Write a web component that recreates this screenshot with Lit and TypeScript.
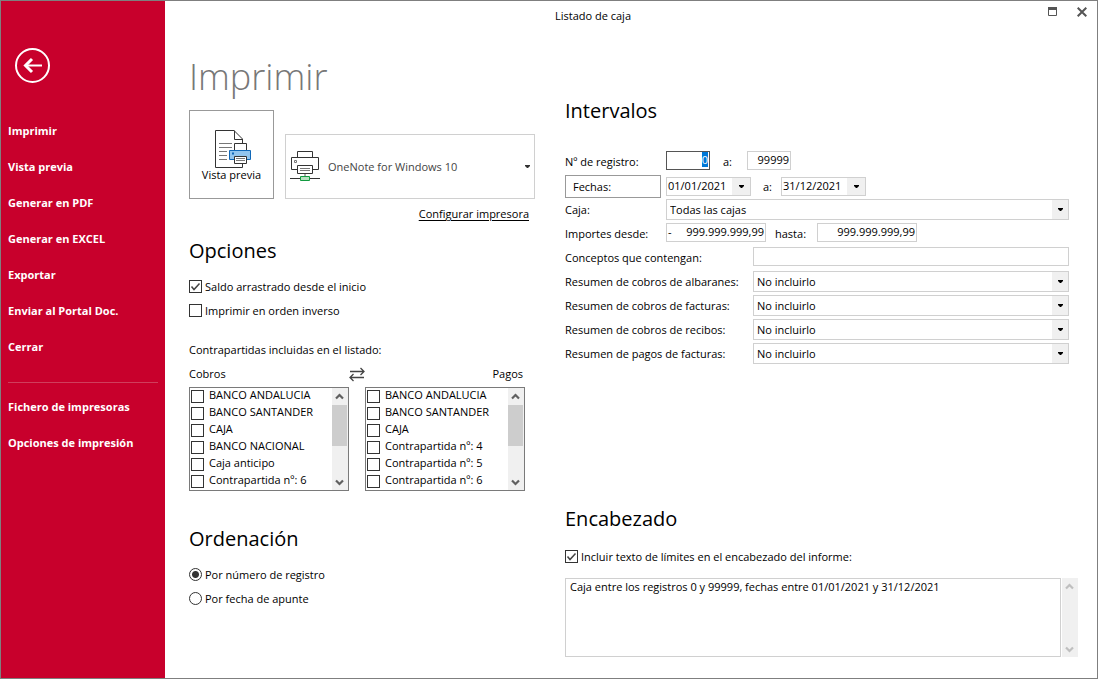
import { LitElement, html, css, svg } from "lit";
import { customElement, property, query } from "lit/decorators.js";

const chevronUp = svg`<path d="M1 5.5 L4.5 2 L8 5.5" fill="none" stroke="currentColor" stroke-width="2.2"/>`;
const chevronDown = svg`<path d="M1 2.5 L4.5 6 L8 2.5" fill="none" stroke="currentColor" stroke-width="2.2"/>`;
const caret = html`<svg class="caret" width="5" height="3" viewBox="0 0 5 3" aria-hidden="true"><path d="M0 0H5V1L3 3H2L0 1Z" fill="currentColor"/></svg>`;

const base = css`
  *, *::before, *::after { box-sizing: border-box; }
  button, input, select, textarea {
    margin: 0;
    padding: 0;
    border: 0;
    border-radius: 0;
    background: none;
    color: inherit;
    font: inherit;
    outline: none;
    appearance: none;
  }
  svg { display: block; flex: none; }
`;

@customElement("scroll-bar")
export class ScrollBar extends LitElement {
  @property({ type: Boolean }) inactive = false;

  static styles = [base, css`
    :host {
      display: flex;
      flex-direction: column;
      width: 16px;
      flex: none;
      background: #f0f0f0;
      color: #606060;
    }
    :host([inactive]) { color: #bfbfbf; }
    .arrow {
      display: flex;
      align-items: center;
      justify-content: center;
      width: 15px;
      height: 17px;
      flex: none;
    }
    .track { flex: 1; }
    .thumb { height: 41px; width: 15px; background: #cdcdcd; }
  `];

  render() {
    return html`
      <button class="arrow" type="button" aria-label="Subir" ?disabled=${this.inactive}>
        <svg width="9" height="8" viewBox="0 0 9 8">${chevronUp}</svg>
      </button>
      <div class="track">${this.inactive ? null : html`<div class="thumb"></div>`}</div>
      <button class="arrow" type="button" aria-label="Bajar" ?disabled=${this.inactive}>
        <svg width="9" height="8" viewBox="0 0 9 8">${chevronDown}</svg>
      </button>
    `;
  }
}

@customElement("app-root")
export class AppRoot extends LitElement {
  @query("#reg-from") private regFrom!: HTMLInputElement;

  private actions = ["Imprimir", "Vista previa", "Generar en PDF", "Generar en EXCEL", "Exportar", "Enviar al Portal Doc.", "Cerrar"];
  private settings = ["Fichero de impresoras", "Opciones de impresión"];
  private cobros = ["BANCO ANDALUCIA", "BANCO SANTANDER", "CAJA", "BANCO NACIONAL", "Caja anticipo", "Contrapartida nº: 6"];
  private pagos = ["BANCO ANDALUCIA", "BANCO SANTANDER", "CAJA", "Contrapartida nº: 4", "Contrapartida nº: 5", "Contrapartida nº: 6"];
  private summaries = [
    "Resumen de cobros de albaranes:",
    "Resumen de cobros de facturas:",
    "Resumen de cobros de recibos:",
    "Resumen de pagos de facturas:",
  ];

  static styles = [base, css`
    :host {
      display: grid;
      grid-template-columns: 164px minmax(0, 1fr);
      box-sizing: border-box;
      min-height: 100vh;
      border: 1px solid #7f7f7f;
      background: #fff;
      color: #000;
      font: 11px/16px "Open Sans", "Noto Sans", sans-serif;
    }

    .side {
      display: flex;
      flex-direction: column;
      padding: 47px 7px 0;
      background: #c8002c;
      color: #fff;
      font-weight: 700;
    }
    .back { align-self: flex-start; margin: 0 7px 30px; }
    .nav { display: flex; flex-direction: column; }
    .nav button { height: 36px; text-align: left; }
    .rule { height: 1px; margin: 17px 0 6px; border: 0; background: #d03e5c; }

    .main { display: flex; flex-direction: column; }
    .titlebar { display: flex; height: 30px; align-items: center; }
    .title { flex: 1; text-align: center; }
    .controls {
      display: flex;
      align-self: flex-start;
      align-items: center;
      gap: 19px;
      width: 76px;
      height: 22px;
      padding-left: 26px;
      color: #555;
    }

    .body {
      flex: 1;
      display: grid;
      grid-template-columns: 346px minmax(0, 1fr);
      column-gap: 30px;
      padding: 20px 19px 21px 24px;
    }
    h1, h2 { margin: 0; font-weight: 400; }
    h1 { margin-bottom: 7px; font-size: 36px; font-weight: 300; line-height: 52px; color: #777; }
    h2 { font-size: 20px; line-height: 30px; }

    .printer { display: flex; align-items: flex-end; gap: 11px; }
    .preview {
      display: flex;
      flex-direction: column;
      align-items: center;
      width: 85px;
      height: 89px;
      padding-top: 19px;
      border: 1px solid #999;
      line-height: 14px;
    }
    .pick { flex: 1; display: grid; height: 65px; align-items: center; }
    .pick > * { grid-area: 1 / 1; }
    .pick select {
      width: 100%;
      height: 100%;
      padding-left: 42px;
      border: 1px solid #d0d0d0;
      color: #444;
    }
    .pick svg { pointer-events: none; }
    .pick .icon { margin-left: 5px; }
    .pick .caret { justify-self: end; margin-right: 5px; color: #333; }
    .config { display: flex; justify-content: flex-end; margin: 7px 6px 14px 0; }
    .config a { color: #000; text-underline-offset: 2px; }

    .options { display: flex; flex-direction: column; gap: 8px; margin-top: 13px; }
    .check { display: flex; align-items: center; gap: 3px; }
    input[type="checkbox"], input[type="radio"] {
      flex: none;
      width: 13px;
      height: 13px;
      border: 1px solid #333;
      background: #fff;
    }
    .check .tick, .check input[type="radio"] { margin-bottom: 1px; }
    input[type="radio"] { border-radius: 50%; }
    input[type="radio"]:checked { background: radial-gradient(circle, #333 0 3px, #fff 4px); }
    .tick { display: grid; flex: none; }
    .tick > * { grid-area: 1 / 1; }
    .tick svg { display: none; pointer-events: none; }
    .tick input:checked + svg { display: block; }

    .counter { width: 336px; margin-top: 23px; }
    .heads {
      display: grid;
      grid-template-columns: 1fr auto 1fr;
      align-items: center;
      margin: 8px 0 5px;
    }
    .heads .end { text-align: right; padding-right: 2px; }
    .lists { display: grid; grid-template-columns: 1fr 1fr; gap: 16px; }
    .list { display: flex; border: 1px solid #7a7a7a; }
    .items { flex: 1; padding-left: 1px; }
    .item { display: flex; align-items: center; gap: 5px; height: 17px; line-height: 14px; }
    .item .text { align-self: flex-start; }
    .order { margin-top: 33px; }

    .right { display: flex; flex-direction: column; padding-top: 45px; }
    .form { display: flex; flex-direction: column; margin: 25px 9px 24px 0; }
    .row { display: flex; align-items: flex-start; height: 24px; }
    .row .name { width: 101px; flex: none; line-height: 22px; }
    .row .long { width: 188px; }
    .row.dates { align-items: center; padding-bottom: 1px; }
    .mid { line-height: 22px; }
    .field { height: 19px; border: 1px solid #d0d0d0; background: #fff; }
    .num { width: 44px; padding: 0 1px 2px; text-align: right; }
    .active { border-color: #555; }
    .active::selection { background: #0078d7; color: #fff; }
    .amount { width: 100px; display: flex; padding: 0 1px 2px; align-items: center; }
    .amount input { flex: 1; min-width: 0; text-align: right; }
    .fechas { width: 96px; height: 23px; margin-right: 5px; padding-left: 7px; border: 1px solid #999; text-align: left; }
    .date { display: flex; width: 85px; }
    .date input { flex: 1; min-width: 0; padding: 0 0 2px 1px; }
    .date button { display: grid; place-items: center; width: 18px; background: #f0f0f0; }
    .gap-l { margin: 0 15px 0 13px; }
    .gap-d { margin: 0 9px 0 12px; }
    .gap-h { margin: 0 11px 0 9px; }
    .combo {
      flex: 1;
      display: grid;
      grid-template-columns: minmax(0, 1fr) 16px;
      height: 21px;
      border: 1px solid #d0d0d0;
    }
    .combo select { grid-area: 1 / 1 / 2 / 3; padding-left: 3px; }
    .combo .drop { grid-area: 1 / 2; display: grid; place-items: center; background: #f0f0f0; pointer-events: none; }
    .wide { flex: 1; min-width: 0; }

    .header { margin-top: auto; }
    .header .check { margin: 15px 0 13px; }
    .memo { display: flex; gap: 1px; height: 79px; }
    .memo textarea { flex: 1; padding: 0 4px; border: 1px solid #d0d0d0; resize: none; overflow: hidden; }
  `];

  firstUpdated() {
    this.regFrom.focus();
    this.regFrom.select();
  }

  private box(checked = false) {
    return html`<span class="tick"><input type="checkbox" .checked=${checked}>
      <svg width="13" height="13" viewBox="0 0 13 13"><path d="M2.5 6.5 L5 9.5 L10.5 3.5" fill="none" stroke="#444" stroke-width="1.5"/></svg></span>`;
  }

  private list(items: string[], label: string) {
    return html`<div class="list" role="group" aria-label=${label}>
      <div class="items">
        ${items.map((t) => html`<label class="item">${this.box()}<span class="text">${t}</span></label>`)}
      </div>
      <scroll-bar></scroll-bar>
    </div>`;
  }

  private combo(id: string, value: string) {
    return html`<div class="combo">
      <select id=${id}><option>${value}</option></select>
      <span class="drop">${caret}</span>
    </div>`;
  }

  private date(id: string, label: string, value: string) {
    return html`<div class="field date">
      <input id=${id} type="text" aria-label=${label} .value=${value}>
      <button type="button" aria-label="Abrir calendario">${caret}</button>
    </div>`;
  }

  render() {
    return html`
      <aside class="side">
        <button class="back" type="button" aria-label="Volver">
          <svg width="35" height="35" viewBox="0 0 35 35" fill="none" stroke="#fff">
            <circle cx="17.5" cy="17.5" r="16.5" stroke-width="2"/>
            <path d="M10.5 17.5H27" stroke-width="2"/>
            <path d="M17 11 L10.5 17.5 L17 24" stroke-width="3"/>
          </svg>
        </button>
        <nav class="nav">${this.actions.map((a) => html`<button type="button">${a}</button>`)}</nav>
        <hr class="rule">
        <nav class="nav">${this.settings.map((a) => html`<button type="button">${a}</button>`)}</nav>
      </aside>

      <main class="main">
        <header class="titlebar">
          <span class="title">Listado de caja</span>
          <div class="controls">
            <button type="button" aria-label="Maximizar">
              <svg width="11" height="10" viewBox="0 0 11 10"><path d="M1.5 .5H9.5V8.5H1.5Z" fill="none" stroke="currentColor"/><path d="M1 0H10V3H1Z" fill="currentColor"/></svg>
            </button>
            <button type="button" aria-label="Cerrar">
              <svg width="10" height="10" viewBox="0 0 10 10"><path d="M.7 .7L9.3 9.3M9.3 .7L.7 9.3" stroke="currentColor" stroke-width="2"/></svg>
            </button>
          </div>
        </header>

        <div class="body">
          <div class="left">
            <h1>Imprimir</h1>
            <div class="printer">
              <button class="preview" type="button">
                <svg width="41" height="38" viewBox="-4 0 41 38" fill="none" stroke="#333">
                  <path d="M27.5 14V9L19 .5H.5V37.5H27.5V33"/>
                  <path d="M19.5 .5V9.5H27.5"/>
                  <path d="M4 13.5H17M4 17.5H17M4 21.5H12M4 25.5H12M4 29.5H12" stroke="#777"/>
                  <path d="M19.5 20.5V13.5H31.5V20.5" fill="#fff"/>
                  <path d="M14.5 20.5H35.5V29.5H14.5Z" fill="#92c5ee" stroke="#1068b8"/>
                  <path d="M17 23.5H19" stroke="#1068b8" stroke-width="2"/>
                  <path d="M19.5 26.5H31.5V33.5H19.5Z" fill="#fff"/>
                  <path d="M21 28.5H30M21 30.5H30" stroke="#777"/>
                </svg>
                <span>Vista previa</span>
              </button>
              <div class="pick">
                <select aria-label="Impresora"><option>OneNote for Windows 10</option></select>
                <svg class="icon" width="30" height="31" viewBox="0 0 30 31" fill="none" stroke="#333">
                  <path d="M7.5 6.5V.5H22.5V6.5"/>
                  <path d="M7.5 18.5H1.5V6.5H28.5V18.5H22.5"/>
                  <path d="M4.5 9.5H6.5V11.5H4.5Z" stroke="#777"/>
                  <path d="M7.5 14.5H22.5V22.5H7.5Z" fill="#fff"/>
                  <path d="M10 17.5H20M10 19.5H20" stroke="#777"/>
                  <path d="M15 23V25" stroke="#aaa" stroke-width="2"/>
                  <path d="M0 27.5H30"/>
                  <path d="M10.5 25.5H19.5V29.5H10.5Z" fill="#b5dfbf" stroke="#129a40"/>
                </svg>
                ${caret}
              </div>
            </div>
            <div class="config"><a href="#configurar">Configurar impresora</a></div>

            <section>
              <h2>Opciones</h2>
              <div class="options">
                <label class="check">${this.box(true)}Saldo arrastrado desde el inicio</label>
                <label class="check">${this.box()}Imprimir en orden inverso</label>
              </div>
              <div class="counter">
                <div>Contrapartidas incluidas en el listado:</div>
                <div class="heads">
                  <span>Cobros</span>
                  <button type="button" aria-label="Intercambiar">
                    <svg width="16" height="16" viewBox="0 0 16 16" fill="none" stroke="#444" stroke-width="1.3">
                      <path d="M1 5.5H15M11.5 2L15 5.5L11.5 9"/><path d="M15 11.5H1M4.5 8L1 11.5L4.5 15"/>
                    </svg>
                  </button>
                  <span class="end">Pagos</span>
                </div>
                <div class="lists">${this.list(this.cobros, "Cobros")}${this.list(this.pagos, "Pagos")}</div>
              </div>
            </section>

            <section class="order">
              <h2>Ordenación</h2>
              <div class="options">
                <label class="check"><input type="radio" name="orden" checked>Por número de registro</label>
                <label class="check"><input type="radio" name="orden">Por fecha de apunte</label>
              </div>
            </section>
          </div>

          <div class="right">
            <section>
              <h2>Intervalos</h2>
              <div class="form">
                <div class="row">
                  <label class="name" for="reg-from">Nº de registro:</label>
                  <input id="reg-from" class="field num active" type="text" .value=${"0"}>
                  <label class="mid gap-l" for="reg-to">a:</label>
                  <input id="reg-to" class="field num" type="text" .value=${"99999"}>
                </div>
                <div class="row dates">
                  <button class="fechas" type="button">Fechas:</button>
                  ${this.date("date-from", "Fecha desde", "01/01/2021")}
                  <label class="mid gap-d" for="date-to">a:</label>
                  ${this.date("date-to", "Fecha hasta", "31/12/2021")}
                </div>
                <div class="row">
                  <label class="name" for="caja">Caja:</label>
                  ${this.combo("caja", "Todas las cajas")}
                </div>
                <div class="row">
                  <label class="name" for="amount-from">Importes desde:</label>
                  <div class="field amount"><span>-</span><input id="amount-from" type="text" .value=${"999.999.999,99"}></div>
                  <label class="mid gap-h" for="amount-to">hasta:</label>
                  <div class="field amount"><input id="amount-to" type="text" .value=${"999.999.999,99"}></div>
                </div>
                <div class="row">
                  <label class="name long" for="concepts">Conceptos que contengan:</label>
                  <input id="concepts" class="field wide" type="text">
                </div>
                ${this.summaries.map((s, i) => html`<div class="row">
                  <label class="name long" for="summary-${i}">${s}</label>
                  ${this.combo(`summary-${i}`, "No incluirlo")}
                </div>`)}
              </div>
            </section>

            <section class="header">
              <h2>Encabezado</h2>
              <label class="check">${this.box(true)}Incluir texto de límites en el encabezado del informe:</label>
              <div class="memo">
                <textarea aria-label="Texto del encabezado" .value=${"Caja entre los registros 0 y 99999, fechas entre 01/01/2021 y 31/12/2021"}></textarea>
                <scroll-bar inactive></scroll-bar>
              </div>
            </section>
          </div>
        </div>
      </main>
    `;
  }
}
